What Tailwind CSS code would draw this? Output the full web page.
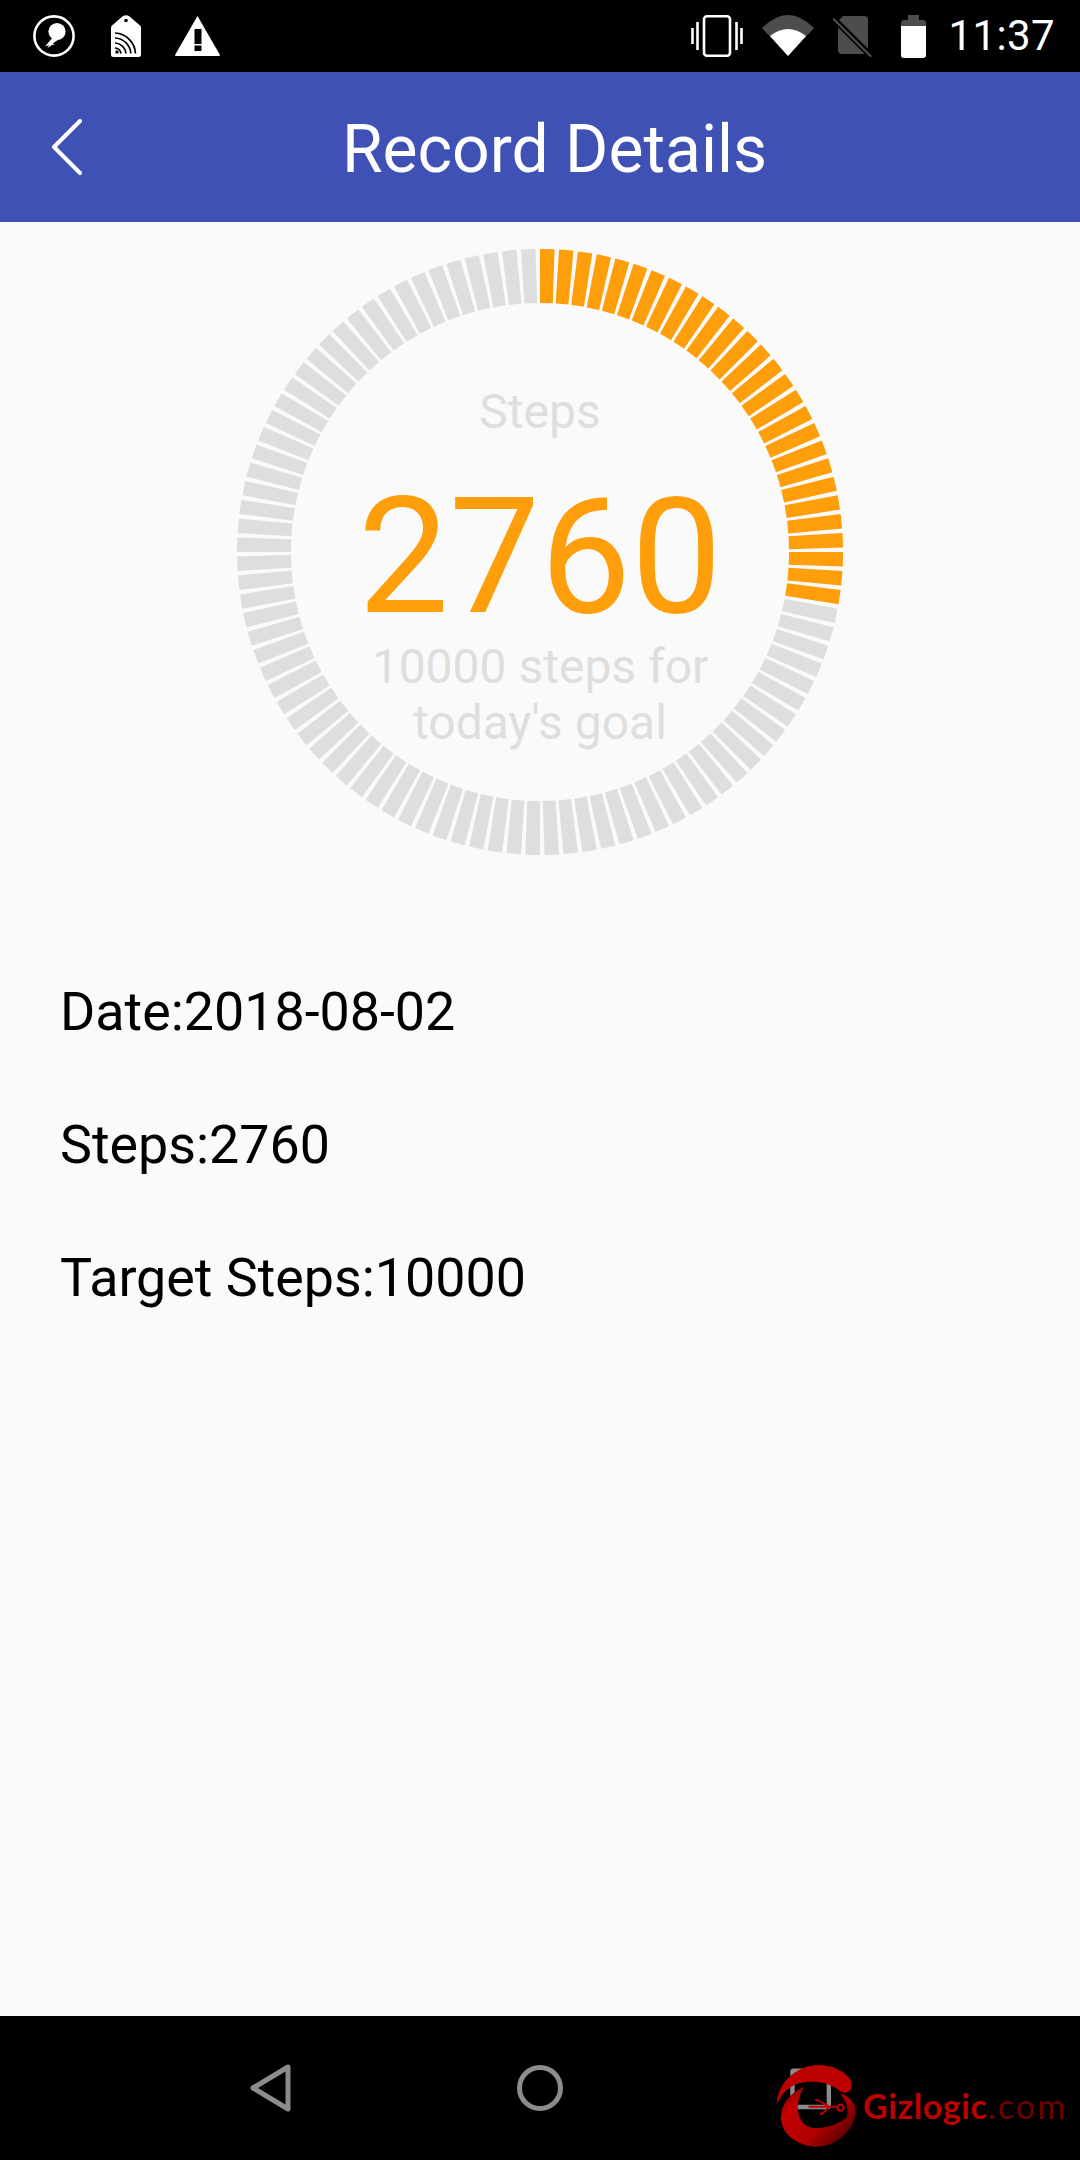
<!DOCTYPE html>
<html lang="en">
<head>
<meta charset="utf-8">
<title>Record Details</title>
<script src="https://cdn.jsdelivr.net/npm/@tailwindcss/browser@4"></script>
</head>
<body class="bg-[#fafafa]">
<div class="flex flex-col w-[1080px] h-[2160px] overflow-hidden font-['Roboto',sans-serif] bg-[#fafafa]">
  <!-- Status bar -->
  <header class="relative flex items-center justify-between h-[72px] bg-black text-white shrink-0">
    <div class="flex items-center pl-[33px] h-full">
      <svg class="w-[42px] h-[42px] mr-[36px]" viewBox="0 0 42 42" fill="none">
        <circle cx="21" cy="21" r="19.6" stroke="#fff" stroke-width="2.6"/>
        <circle cx="24" cy="16.5" r="8.6" fill="#fff"/>
        <path d="M20 22 L12 31.5 L16 30 L14.5 33 L19 30 L22 29.5 L19.5 28.5 L25 25 Z" fill="#fff"/>
      </svg>
      <svg class="w-[30px] h-[42px] mr-[34px]" viewBox="0 0 30 42">
        <path d="M1 10.5 L12 1 Q15 -0.5 18 1 L29 10.5 Q30 11.5 30 13 V39.500 Q30 42 27.500 42 H2.500 Q0 42 0 39.500 V13 Q0 11.500 1 10.500 Z" fill="#fff"/>
        <circle cx="15" cy="5.500" r="1.800" fill="#000"/>
        <g fill="none" stroke="#000" stroke-width="1.700">
          <path d="M4 18 A21.500 21.500 0 0 1 24.500 38.500"/>
          <path d="M4 23 A16.500 16.500 0 0 1 19.800 38.500"/>
          <path d="M4 28 A11.500 11.500 0 0 1 15 38.500"/>
          <path d="M4 33 A6.500 6.500 0 0 1 10 38.500"/>
        </g>
        <circle cx="6" cy="37" r="1.700" fill="#000"/>
      </svg>
      <svg class="w-[45px] h-[40px]" viewBox="0 0 45 40">
        <path d="M22.500 0 L45 39 Q45 40 44 40 H1 Q0 40 0 39 Z M19.500 13 V28 H26.500 V13 Z M19.500 29.500 V35 H26.500 V29.500 Z" fill="#fff" fill-rule="evenodd"/>
      </svg>
    </div>
    <div class="flex items-center h-full pr-[25px]">
      <svg class="w-[52px] h-[42px] mr-[19px]" viewBox="0 0 52 42" fill="none">
        <rect x="13" y="1.300" width="26" height="39.500" rx="3" stroke="#fff" stroke-width="2.600"/>
        <path d="M6.500 7 V35 M1.500 13 V29 M45.500 7 V35 M50.500 13 V29" stroke="#fff" stroke-width="2.600"/>
      </svg>
      <svg class="w-[52px] h-[42px] mr-[19px]" viewBox="0 0 52 42">
        <path d="M0 13 Q26 -13 52 13 L26 41 Z" fill="#4d4d4d"/>
        <path d="M8 21 Q26 7 44 21 L26 41 Z" fill="#fff"/>
      </svg>
      <svg class="w-[40px] h-[42px] mr-[28px]" viewBox="0 0 40 42">
        <path d="M10 1 H31 Q35 1 35 5 V35 Q35 39 31 39 H9 Q5 39 5 35 V6 Z" fill="#4d4d4d"/>
        <path d="M0 3 L38 41" stroke="#000" stroke-width="6"/>
        <path d="M0.500 4 L37.500 41" stroke="#4d4d4d" stroke-width="2.200" stroke-linecap="round"/>
      </svg>
      <svg class="w-[25px] h-[43px] mr-[22px]" viewBox="0 0 25 43">
        <path d="M7 0 H18 V5 H22 Q25 5 25 8 V12 H0 V8 Q0 5 3 5 H7 Z" fill="#4d4d4d"/>
        <path d="M0 11 H25 V40 Q25 43 22 43 H3 Q0 43 0 40 Z" fill="#fff"/>
      </svg>
      <span class="text-[42px] leading-none tracking-[0.4px]">11:37</span>
    </div>
  </header>

  <!-- App bar -->
  <nav class="relative flex items-center justify-center h-[150px] pt-[5px] pl-[29px] bg-[#3f51b5] shrink-0">
    <svg class="absolute left-[50px] top-[47px] w-[34px] h-[58px]" viewBox="0 0 34 58" fill="none">
      <path d="M30 2 L4 28 L30 54" stroke="#fff" stroke-width="4" stroke-linecap="round" stroke-linejoin="round"/>
    </svg>
    <h1 class="text-[66px] leading-none text-white">Record Details</h1>
  </nav>

  <!-- Content -->
  <main class="flex flex-col flex-1 bg-[#fafafa]">
    <section class="relative w-[606px] h-[606px] mt-[27px] self-center shrink-0">
      <svg class="absolute inset-0 w-[606px] h-[606px]" viewBox="-303 -303 606 606">
        <defs>
          <path id="seg" d="M0 -303 A303 303 0 0 1 14.500 -302.700 L12.800 -248.700 A249 249 0 0 0 0 -249 Z"/>
          <g id="ten">
            <use href="#seg"/><use href="#seg" transform="rotate(3.6)"/><use href="#seg" transform="rotate(7.2)"/><use href="#seg" transform="rotate(10.8)"/><use href="#seg" transform="rotate(14.4)"/><use href="#seg" transform="rotate(18)"/><use href="#seg" transform="rotate(21.6)"/><use href="#seg" transform="rotate(25.2)"/><use href="#seg" transform="rotate(28.8)"/><use href="#seg" transform="rotate(32.4)"/>
          </g>
        </defs>
        <g fill="#ff9e0b">
          <use href="#ten"/><use href="#ten" transform="rotate(36)"/>
          <use href="#seg" transform="rotate(72)"/><use href="#seg" transform="rotate(75.6)"/><use href="#seg" transform="rotate(79.2)"/><use href="#seg" transform="rotate(82.8)"/><use href="#seg" transform="rotate(86.4)"/><use href="#seg" transform="rotate(90)"/><use href="#seg" transform="rotate(93.6)"/><use href="#seg" transform="rotate(97.2)"/>
        </g>
        <g fill="#dedede">
          <use href="#seg" transform="rotate(100.8)"/><use href="#seg" transform="rotate(104.4)"/>
          <use href="#ten" transform="rotate(108)"/><use href="#ten" transform="rotate(144)"/><use href="#ten" transform="rotate(180)"/><use href="#ten" transform="rotate(216)"/><use href="#ten" transform="rotate(252)"/><use href="#ten" transform="rotate(288)"/><use href="#ten" transform="rotate(324)"/>
        </g>
      </svg>
      <div class="absolute inset-0 flex flex-col items-center text-center">
        <p class="mt-[135px] text-[48px] leading-[56px] text-[#dedede]">Steps</p>
        <p class="mt-[52px] text-[162px] leading-[130px] text-[#ff9e0b]">2760</p>
        <p class="mt-[17px] text-[48px] leading-[56px] w-[400px] text-[#dedede]">10000 steps for today's goal</p>
      </div>
    </section>
    <section class="flex flex-col pl-[60px] mt-[129px] gap-[77px] text-[53.8px] leading-[56px] text-black">
      <p>Date:2018-08-02</p>
      <p>Steps:2760</p>
      <p>Target Steps:10000</p>
    </section>
  </main>

  <!-- Navigation bar -->
  <footer class="relative h-[144px] bg-black shrink-0">
    <svg class="absolute left-[250px] top-[48px] w-[42px] h-[48px]" viewBox="0 0 42 48" fill="none">
      <path d="M38 3 L3 24 L38 45 Z" stroke="#8c8c8c" stroke-width="5" stroke-linejoin="round"/>
    </svg>
    <svg class="absolute left-[517px] top-[49px] w-[46px] h-[46px]" viewBox="0 0 46 46" fill="none">
      <circle cx="23" cy="23" r="20.500" stroke="#8c8c8c" stroke-width="5"/>
    </svg>
    <svg class="absolute left-[776px] top-[49px] w-[81px] h-[82px]" viewBox="48 75 242 246" fill="none">
      <defs>
        <linearGradient id="gizGrad" x1="0" y1="0" x2="1" y2="0.800">
          <stop offset="0" stop-color="#5a0000"/>
          <stop offset="0.250" stop-color="#c40000"/>
          <stop offset="0.650" stop-color="#b00000"/>
          <stop offset="0.900" stop-color="#650000"/>
        </linearGradient>
      </defs>
      <path d="M97 203 V95 Q97 92 100 92 H203 Q206 92 206 95 V198 Q206 201 203 201 H97" stroke="#8c8c8c" stroke-width="13"/>
      <path d="M132 140 C85 160 62 195 62 235 C65 285 115 320 170 320 C220 320 268 285 285 230 C294 195 270 170 240 160 C262 190 265 205 260 232 C240 250 190 272 150 262 C110 250 100 190 132 140 Z" fill="url(#gizGrad)"/>
      <path d="M50 195 C50 130 110 75 175 75 C225 75 275 105 275 135 C275 160 250 165 235 150 C205 125 150 120 115 130 C85 140 60 165 50 195 Z" fill="#bd0000"/>
      <path d="M145 200 H230 M172 180 L208 200 L185 222 M165 180 H174 M180 222 H188" stroke="#bd0000" stroke-width="6"/>
      <circle cx="241" cy="203" r="9" stroke="#bd0000" stroke-width="6"/>
    </svg>
    <p class="absolute left-[863px] top-[67px] text-[34px] leading-[46px] font-['Lato',sans-serif] font-bold tracking-[0.600px] text-[#bd0000] whitespace-nowrap">Gizlogic<span class="font-normal text-[#6e0000] tracking-[2.200px]">.com</span></p>
  </footer>
</div>
</body>
</html>
